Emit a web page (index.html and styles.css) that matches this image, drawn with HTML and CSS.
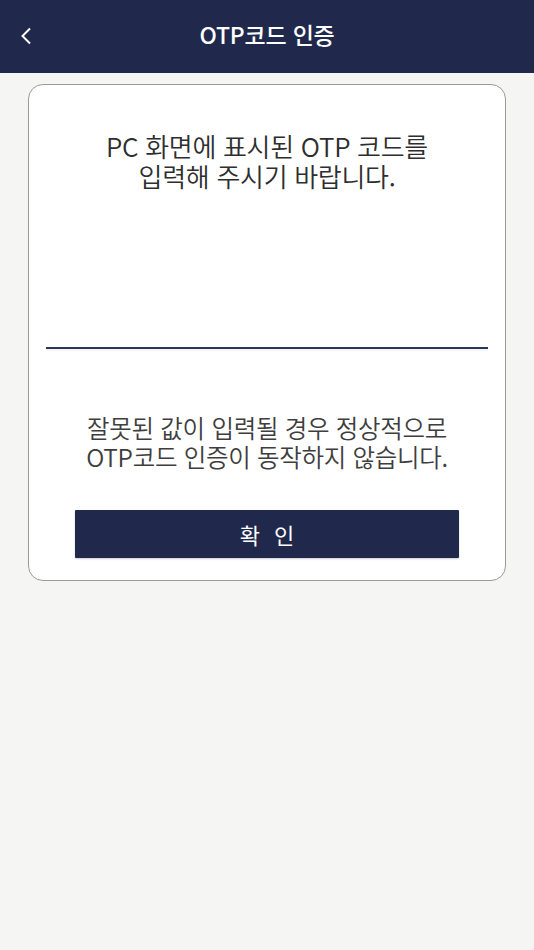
FILE: index.html
```html
<!DOCTYPE html>
<html lang="ko">
<head>
<meta charset="utf-8">
<link rel="stylesheet" href="styles.css">
</head>
<body>
<header class="topbar">
  <button class="back" aria-label="뒤로">
    <svg width="12" height="18" viewBox="0 0 12 18"><path d="M10 1.5 L2.5 9 L10 16.5" fill="none" stroke="#fff" stroke-width="2"/></svg>
  </button>
  <h1 class="title">OTP코드 인증</h1>
</header>
<main class="content">
  <section class="card">
    <p class="lead"><span class="ln">PC 화면에 표시된 OTP 코드를</span><span class="ln">입력해 주시기 바랍니다.</span></p>
    <input class="otp" type="text" aria-label="OTP 코드">
    <p class="note"><span class="ln">잘못된 값이 입력될 경우 정상적으로</span><span class="ln">OTP코드 인증이 동작하지 않습니다.</span></p>
    <button class="confirm">확 인</button>
  </section>
</main>
</body>
</html>
```
FILE: styles.css
```css
* { box-sizing: border-box; }
html, body { margin: 0; padding: 0; }
body {
  background: #f5f5f3;
  font-family: "Noto Sans CJK KR", "Noto Sans", sans-serif;
  width: 534px;
  min-height: 950px;
}
.topbar {
  height: 73px;
  background: #20294b;
  display: flex;
  align-items: center;
  justify-content: center;
  position: relative;
}
.back {
  position: absolute;
  left: 20px;
  top: 27px;
  background: none;
  border: 0;
  padding: 0;
  width: 14px;
  height: 20px;
  display: flex;
}
.title {
  margin: 0 0 5px 0;
  color: #fff;
  font-size: 23px;
  font-weight: 500;
  letter-spacing: -0.2px;
}
.content {
  padding: 11px 28px 0 28px;
}
.card {
  background: #fff;
  border: 1.5px solid #9a9a9a;
  border-radius: 15px;
  height: 497px;
  padding: 46px 17px 0 17px;
  display: flex;
  flex-direction: column;
  align-items: center;
}
.ln { display: block; }
.lead {
  margin: 0;
  text-align: center;
  color: #2e2e2e;
  font-size: 26px;
  font-weight: 350;
  line-height: 30px;
  letter-spacing: -0.3px;
}
.otp {
  margin-top: 134px;
  width: 100%;
  border: 0;
  border-bottom: 2px solid #2c365a;
  height: 24px;
  outline: none;
  box-shadow: 0 2px 1px rgba(0,0,0,0.04);
}
.note {
  margin: 64px 0 0 0;
  text-align: center;
  color: #3e3e3e;
  font-size: 24.5px;
  font-weight: 350;
  line-height: 29px;
  letter-spacing: -0.3px;
}
.confirm {
  margin-top: 39px;
  width: 384px;
  height: 48px;
  background: #20294b;
  color: #fff;
  border: 0;
  border-radius: 1px;
  font-family: "Noto Sans CJK KR", sans-serif;
  font-size: 22px;
  font-weight: 400;
  letter-spacing: 4px;
  text-indent: 4px;
  box-shadow: 0 1px 2px rgba(0,0,0,0.2);
}
```
